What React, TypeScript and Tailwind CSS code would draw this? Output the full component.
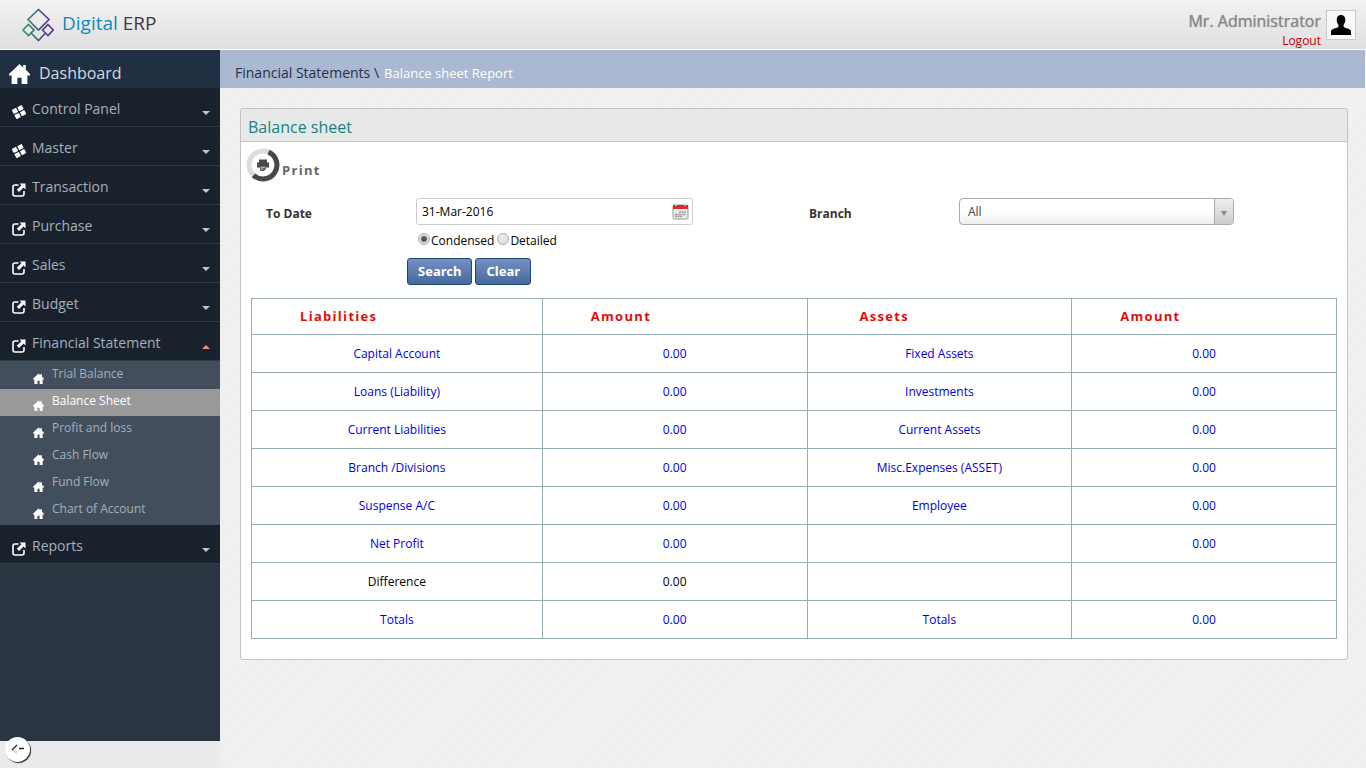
import { useState } from "react";

type MenuItem = {
  label: string;
  icon: "tiles" | "link";
  children?: string[];
};

type Cell = { text: string; plain?: boolean };

const MENU: MenuItem[] = [
  { label: "Control Panel", icon: "tiles" },
  { label: "Master", icon: "tiles" },
  { label: "Transaction", icon: "link" },
  { label: "Purchase", icon: "link" },
  { label: "Sales", icon: "link" },
  { label: "Budget", icon: "link" },
  {
    label: "Financial Statement",
    icon: "link",
    children: [
      "Trial Balance",
      "Balance Sheet",
      "Profit and loss",
      "Cash Flow",
      "Fund Flow",
      "Chart of Account",
    ],
  },
  { label: "Reports", icon: "link" },
];

const ROWS: Cell[][] = [
  [{ text: "Capital Account" }, { text: "0.00" }, { text: "Fixed Assets" }, { text: "0.00" }],
  [{ text: "Loans (Liability)" }, { text: "0.00" }, { text: "Investments" }, { text: "0.00" }],
  [{ text: "Current Liabilities" }, { text: "0.00" }, { text: "Current Assets" }, { text: "0.00" }],
  [{ text: "Branch /Divisions" }, { text: "0.00" }, { text: "Misc.Expenses (ASSET)" }, { text: "0.00" }],
  [{ text: "Suspense A/C" }, { text: "0.00" }, { text: "Employee" }, { text: "0.00" }],
  [{ text: "Net Profit" }, { text: "0.00" }, { text: "" }, { text: "0.00" }],
  [{ text: "Difference", plain: true }, { text: "0.00", plain: true }, { text: "" }, { text: "" }],
  [{ text: "Totals" }, { text: "0.00" }, { text: "Totals" }, { text: "0.00" }],
];

export default function App() {
  return (
    <div className="flex min-h-screen flex-col bg-[#efefef] font-['Open_Sans',sans-serif] text-xs text-black">
      <Header />
      <div className="flex flex-1">
        <Sidebar />
        <main className="min-w-0 flex-1 bg-[repeating-linear-gradient(135deg,#f1f1f1_0px,#f1f1f1_2px,#ededed_2px,#ededed_3px)]">
          <nav className="mr-px flex h-[38px] items-center gap-[5px] bg-[#abb8d1] px-[15px] pt-[7px]">
            <a href="#" className="text-sm leading-5 text-[#24324a]">
              Financial Statements \
            </a>
            <span className="text-[13px] leading-5 text-white">Balance sheet Report</span>
          </nav>
          <section className="mt-5 mr-[18px] ml-5 rounded-[3px] border border-[#bfc3c3] bg-white">
            <h1 className="flex h-[33px] items-center rounded-t-[3px] border-b border-[#b2cdca] bg-[#e7e8e8] px-[7px] pt-[3px] text-base text-[#188281]">
              Balance sheet
            </h1>
            <div className="px-[10px] pb-5">
              <button
                type="button"
                className="-ml-[5px] flex h-[46px] items-center gap-[2px] text-[13px] font-bold tracking-widest text-[#666]"
              >
                <PrintIcon />
                <span className="pt-3">Print</span>
              </button>
              <Filters />
              <BalanceTable />
            </div>
          </section>
        </main>
      </div>
    </div>
  );
}

function Header() {
  return (
    <header className="flex h-[50px] justify-between border-b border-white bg-linear-to-b from-[#f3f3f3] to-[#dfdfdf] pr-[10px] pl-[22px]">
      <a href="#" className="flex items-center gap-2 text-[19px] font-medium">
        <Logo />
        <span className="pb-[2px] text-[#0d8abf]">
          Digital <span className="text-[#3c3a40]">ERP</span>
        </span>
      </a>
      <div className="flex gap-[5px] pt-[10px]">
        <div className="flex flex-col items-end">
          <span className="text-base leading-[22px] text-[#8a8a8a] text-shadow-[0_0_1px_#8a8a8a]">
            Mr. Administrator
          </span>
          <a href="#" className="text-xs leading-[18px] text-[#c00008]">
            Logout
          </a>
        </div>
        <div className="flex size-[30px] items-center justify-center border border-[#c9c9c9] bg-[#f8f8f8]">
          <svg viewBox="0 0 20 20" className="size-5">
            <path d="M10 0c2.700 0 4.300 1.800 4.300 4.600 0 2.400-.7 4.200-1.700 5.200v2c0 1.200 6.400 1.400 7.400 4.300V20H0v-3.900c1-2.900 7.400-3.100 7.400-4.300v-2c-1-1-1.700-2.800-1.700-5.200C5.700 1.800 7.300 0 10 0z" />
          </svg>
        </div>
      </div>
    </header>
  );
}

function Sidebar() {
  const [open, setOpen] = useState("Financial Statement");

  return (
    <aside className="flex w-[220px] shrink-0 flex-col bg-[#e9ebec]">
      <nav className="flex-1 bg-[#2b3541]">
        <a
          href="#"
          className="flex h-[38px] items-center gap-[9px] bg-[#202f42] px-[9px] pt-2 text-base text-[#d5dae0]"
        >
          <HomeIcon className="size-[21px]" />
          Dashboard
        </a>
        <ul>
          {MENU.map((item) => (
            <li key={item.label}>
              <button
                type="button"
                onClick={() => setOpen(open === item.label ? "" : item.label)}
                className="flex h-[39px] w-full items-center gap-[6px] border-b border-[#303b46] bg-[#19222c] pt-[3px] pr-[10px] pl-3 text-sm text-[#a6b0bb]"
              >
                {item.icon === "tiles" ? <TilesIcon /> : <LinkIcon />}
                <span className="flex-1 text-left">{item.label}</span>
                <svg viewBox="0 0 8 4" className="mt-[9px] h-1 w-2">
                  {item.children && open === item.label ? (
                    <path d="M0 4h8L4 0z" fill="#f0906f" />
                  ) : (
                    <path d="M0 0h8L4 4z" fill="#b9c4e6" />
                  )}
                </svg>
              </button>
              {item.children && open === item.label && (
                <ul className="bg-[#424e5b] py-px">
                  {item.children.map((child) => (
                    <li key={child}>
                      <a
                        href="#"
                        className={
                          child === "Balance Sheet"
                            ? "flex h-[27px] items-center gap-2 bg-[#9a9999] pb-[3px] pl-[33px] text-white"
                            : "flex h-[27px] items-center gap-2 pb-[3px] pl-[33px] text-[#a4b0bd]"
                        }
                      >
                        <HomeIcon className="mt-2 size-[11px]" />
                        {child}
                      </a>
                    </li>
                  ))}
                </ul>
              )}
            </li>
          ))}
        </ul>
      </nav>
      <div className="relative h-[27px]">
        <button
          type="button"
          aria-label="Collapse menu"
          className="absolute -top-1 left-[5px] flex size-[25px] items-center justify-center rounded-full bg-white shadow-[1px_1px_1px_#222]"
        >
          <svg viewBox="0 0 14 12" className="h-3 w-[14px]" fill="none">
            <path d="M1 6h11M1 6l5 5V6z" fill="#ddd" />
            <path d="M1 6l5-5M8 4.500h5" stroke="#222" strokeWidth="1.300" />
          </svg>
        </button>
      </div>
    </aside>
  );
}

function Filters() {
  const [mode, setMode] = useState("Condensed");

  return (
    <form className="pt-[10px]">
      <div className="grid grid-cols-2">
        <div className="flex pl-[15px]">
          <label htmlFor="to-date" className="w-[150px] pt-2 text-xs font-bold text-[#333]">
            To Date
          </label>
          <div>
            <div className="relative w-[277px]">
              <input
                id="to-date"
                type="text"
                defaultValue="31-Mar-2016"
                className="h-[27px] w-full rounded-[3px] border border-[#ccc] bg-white px-[5px] text-xs text-black"
              />
              <button type="button" aria-label="Pick a date" className="absolute top-[5px] right-1">
                <CalendarIcon />
              </button>
            </div>
            <div className="flex h-[33px] items-center gap-[3px] pb-px pl-[2px]">
              {["Condensed", "Detailed"].map((name) => (
                <label key={name} className="flex items-center gap-px">
                  <input
                    type="radio"
                    name="mode"
                    checked={mode === name}
                    onChange={() => setMode(name)}
                    className="mb-1 size-3 appearance-none rounded-full border border-[#aaa] bg-linear-to-b from-[#eee] to-[#ddd] checked:bg-[radial-gradient(circle,#555_0px,#555_2px,#e6e6e6_4px)]"
                  />
                  {name}
                </label>
              ))}
            </div>
          </div>
        </div>
        <div className="flex pl-[15px]">
          <label htmlFor="branch" className="w-[150px] pt-2 text-xs font-bold text-[#333]">
            Branch
          </label>
          <div className="relative h-[27px] w-[275px]">
            <select
              id="branch"
              className="h-full w-full appearance-none rounded-[4px] border border-[#aaa] bg-linear-to-b from-white from-50% to-[#eee] px-2 text-xs text-[#444]"
            >
              <option>All</option>
            </select>
            <span className="pointer-events-none absolute inset-y-px right-px flex w-[19px] items-center justify-center rounded-r-[3px] border-l border-[#aaa] bg-linear-to-b from-[#eee] to-[#ccc]">
              <svg viewBox="0 0 6 5" className="mt-[3px] h-[5px] w-[6px]">
                <path d="M0 0h6L3 5z" fill="#888" />
              </svg>
            </span>
          </div>
        </div>
      </div>
      <div className="flex gap-[3px] pl-[156px]">
        <FormButton label="Search" />
        <FormButton label="Clear" />
      </div>
    </form>
  );
}

function FormButton({ label }: { label: string }) {
  return (
    <button
      type="button"
      className="h-[27px] rounded-[3px] border border-[#1f4a78] bg-linear-to-b from-[#7590c4] to-[#47699c] px-[10px] pb-[2px] font-['Noto_Sans',sans-serif] text-[13px] leading-4 font-bold text-white"
    >
      {label}
    </button>
  );
}

function BalanceTable() {
  const head = "border border-[#98acb4] text-left";

  return (
    <table className="mt-[13px] w-full table-fixed border-collapse">
      <thead>
        <tr className="h-9 text-[13px] tracking-widest text-[#e60b0b]">
          <th className={`${head} w-[26.8%] pl-12`}>Liabilities</th>
          <th className={`${head} pl-12`}>Amount</th>
          <th className={`${head} pl-[52px]`}>Assets</th>
          <th className={`${head} pl-12`}>Amount</th>
        </tr>
      </thead>
      <tbody>
        {ROWS.map((row, i) => (
          <tr key={i} className="h-[38px]">
            {row.map((cell, j) => (
              <td key={j} className="border border-[#98acb4] text-center font-medium">
                {cell.plain ? (
                  cell.text
                ) : (
                  <a href="#" className="text-[#0000dc]">
                    {cell.text}
                  </a>
                )}
              </td>
            ))}
          </tr>
        ))}
      </tbody>
    </table>
  );
}

function Logo() {
  return (
    <svg viewBox="0 0 32 34" className="h-[34px] w-8" fill="none" stroke="url(#logo)" strokeWidth="1.600">
      <defs>
        <linearGradient id="logo" gradientUnits="userSpaceOnUse" x1="0" y1="0" x2="32" y2="0">
          <stop offset="0" stopColor="#2fa573" />
          <stop offset="0.500" stopColor="#3d5b78" />
          <stop offset="1" stopColor="#6a1fa0" />
        </linearGradient>
      </defs>
      <path d="M16.500 1.500l10.500 10-10.500 10.500L6 11.500z" />
      <path d="M6.500 16.500l5.500 5.500-5.500 5.500L1 22z" />
      <path d="M26 16.500l5.200 5.500-5.200 5.500-5.500-5.500z" />
      <path d="M9 25l7.500 7.500L23.500 25" />
    </svg>
  );
}

function HomeIcon({ className }: { className: string }) {
  return (
    <svg viewBox="0 0 20 20" fill="#fff" className={className}>
      <path d="M10 1l3.500 3.200V2H16v4.500l4 4V12h-2.500v8H12v-6H8v6H2.500v-8H0v-1.500z" />
    </svg>
  );
}

function TilesIcon() {
  return (
    <svg viewBox="0 0 14 14" fill="#fff" className="mt-[6px] size-[14px]">
      <g transform="rotate(-28 7 7)">
        <rect x="1.400" y="1.900" width="5" height="4.600" rx="0.700" />
        <rect x="7.600" y="1.900" width="5" height="4.600" rx="0.700" />
        <rect x="1.400" y="7.600" width="5" height="4.600" rx="0.700" />
        <rect x="7.600" y="7.600" width="5" height="4.600" rx="0.700" />
      </g>
    </svg>
  );
}

function LinkIcon() {
  return (
    <svg viewBox="0 0 14 14" className="mt-[6px] size-[14px]">
      <path
        d="M6.500 2H3a2 2 0 0 0-2 2v7a2 2 0 0 0 2 2h7a2 2 0 0 0 2-2V8"
        fill="none"
        stroke="#fff"
        strokeWidth="1.600"
      />
      <path d="M7.500 0.500H13.500v6l-2-2-4.500 4.500-2.200-2.200 4.600-4.500z" fill="#fff" />
    </svg>
  );
}

function PrintIcon() {
  return (
    <svg viewBox="0 0 34 34" className="size-[34px]" fill="none">
      <circle cx="17" cy="17" r="14" stroke="#dcdcdc" strokeWidth="5" />
      <path d="M22.500 4.100A14 14 0 1 1 7.500 27.300" stroke="#484848" strokeWidth="5" />
      <path d="M13 11.500h8v3h2v5h-3v-1.500h-6v1.500h-3v-5h2z" fill="#484848" />
      <path d="M14 18h6v3l-2 2h-4z" fill="#666" />
      <path d="M15 19.500h4M15 21h2" stroke="#ddd" strokeWidth="0.700" />
    </svg>
  );
}

function CalendarIcon() {
  return (
    <svg viewBox="0 0 17 17" className="size-[17px]">
      <rect x="1" y="2" width="15" height="14" rx="1.500" fill="#ececec" stroke="#999" />
      <path d="M1 2h15v4H1z" fill="#cf3030" />
      <path d="M4 0v3M13 0v3" stroke="#ddd" strokeWidth="1.500" />
      <path d="M7 9h7M3 11.500h11M3 13.500h7" stroke="#999" strokeWidth="1.600" strokeDasharray="2 0.600" />
    </svg>
  );
}
